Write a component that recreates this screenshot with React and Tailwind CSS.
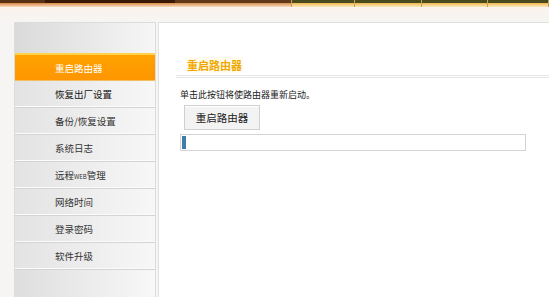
const menu = ["恢复出厂设置", "备份/恢复设置", "系统日志", "远程WEB管理", "网络时间", "登录密码", "软件升级"];

function TopBar() {
  return (
    <div className="flex h-[7px] w-full">
      <div className="flex w-[45px] flex-col">
        <div className="h-[3px] bg-[#5a3014]" />
        <div className="h-[4px] bg-gradient-to-b from-[#d9843a] to-[#f6dcc0]" />
      </div>
      <div className="flex w-[130px] flex-col">
        <div className="h-[3px] bg-[#3a1806]" />
        <div className="h-[4px] bg-gradient-to-b from-[#d98a3e] to-[#f6dcc0]" />
      </div>
      <div className="flex w-[117px] flex-col">
        <div className="h-[3px] bg-[#62381a]" />
        <div className="h-[4px] bg-gradient-to-b from-[#d9904a] to-[#f6dcc0]" />
      </div>
      {[63, 67, 66, 61].map((w, i) => (
        <div key={i} className="flex flex-col border-l border-[#c9a050]" style={{ width: w }}>
          <div className="h-[3px] bg-[#4a4a1c]" />
          <div className="h-[4px] bg-gradient-to-b from-[#f0b848] to-[#fbe8c0]" />
        </div>
      ))}
      <div className="flex flex-1 flex-col border-l border-[#c9a050]">
        <div className="h-[3px] bg-[#4a4a1c]" />
        <div className="h-[4px] bg-gradient-to-b from-[#f0b848] to-[#fbe8c0]" />
      </div>
    </div>
  );
}

export default function App() {
  return (
    <div
      className="flex h-[297px] w-[549px] flex-col overflow-hidden bg-[#f6f5f3] text-[#333]"
      style={{ fontFamily: '"Noto Sans CJK SC", "Noto Sans", sans-serif' }}
    >
      <TopBar />
      <div className="h-[15px] bg-gradient-to-b from-[#fbf3ec] to-[#f6f5f3]" />
      <div className="flex flex-1 pl-[14px]">
        <div className="flex w-[142px] flex-col border border-b-0 border-[#dcdcdc] bg-gradient-to-r from-[#dedede] to-[#f8f8f8]">
          <div className="h-[30px] bg-gradient-to-r from-[#dadada] to-[#f6f6f6]" />
          <div className="flex h-[28px] items-center border-t-2 border-[#ffd24a] bg-gradient-to-b from-[#ffa200] to-[#ff9500] pl-[40px] text-[9.5px] text-white shadow-[inset_0_-1px_0_#f0c060]">
            重启路由器
          </div>
          {menu.map((m, i) => (
            <div
              key={m}
              className={`flex h-[27px] items-center border-b border-[#d4d4d4] bg-gradient-to-r from-[#e3e3e3] to-[#f7f7f7] pl-[40px] text-[9.5px] shadow-[inset_0_-1px_0_#fbfbfb] ${i === 0 ? "text-[#111]" : "text-[#333]"}`}
            >
              {m === "远程WEB管理" ? (
                <span>
                  远程<span className="text-[6px]">WEB</span>管理
                </span>
              ) : (
                m
              )}
            </div>
          ))}
          <div className="flex-1" />
        </div>
        <div className="ml-[2px] flex flex-1 flex-col border-l border-t border-[#e0e0e0] bg-white pl-[17px]">
          <div className="mt-[32px] flex h-[23px] items-center border-b-[3px] border-double border-[#e6e6e6] pl-[10px]">
            <span className="bg-[#fffcef] px-[1px] text-[11px] font-bold text-[#f0a800]">重启路由器</span>
          </div>
          <div className="pl-[4px]">
            <div className="mt-[10px] text-[9px] leading-[14px] text-[#222]">单击此按钮将使路由器重新启动。</div>
            <button className="ml-[4px] mt-[3px] flex h-[25px] w-[76px] items-center justify-center border border-[#d0d0d0] bg-[#f3f3f3] text-[10.5px] text-[#222] shadow-[inset_0_1px_0_#fff]">
              重启路由器
            </button>
            <div className="mt-[4px] flex h-[17px] w-[346px] items-center border border-[#d4d4d4] bg-white px-[1px]">
              <div className="h-[13px] w-[4px] bg-[#3f7ea8]" />
            </div>
          </div>
        </div>
      </div>
    </div>
  );
}
